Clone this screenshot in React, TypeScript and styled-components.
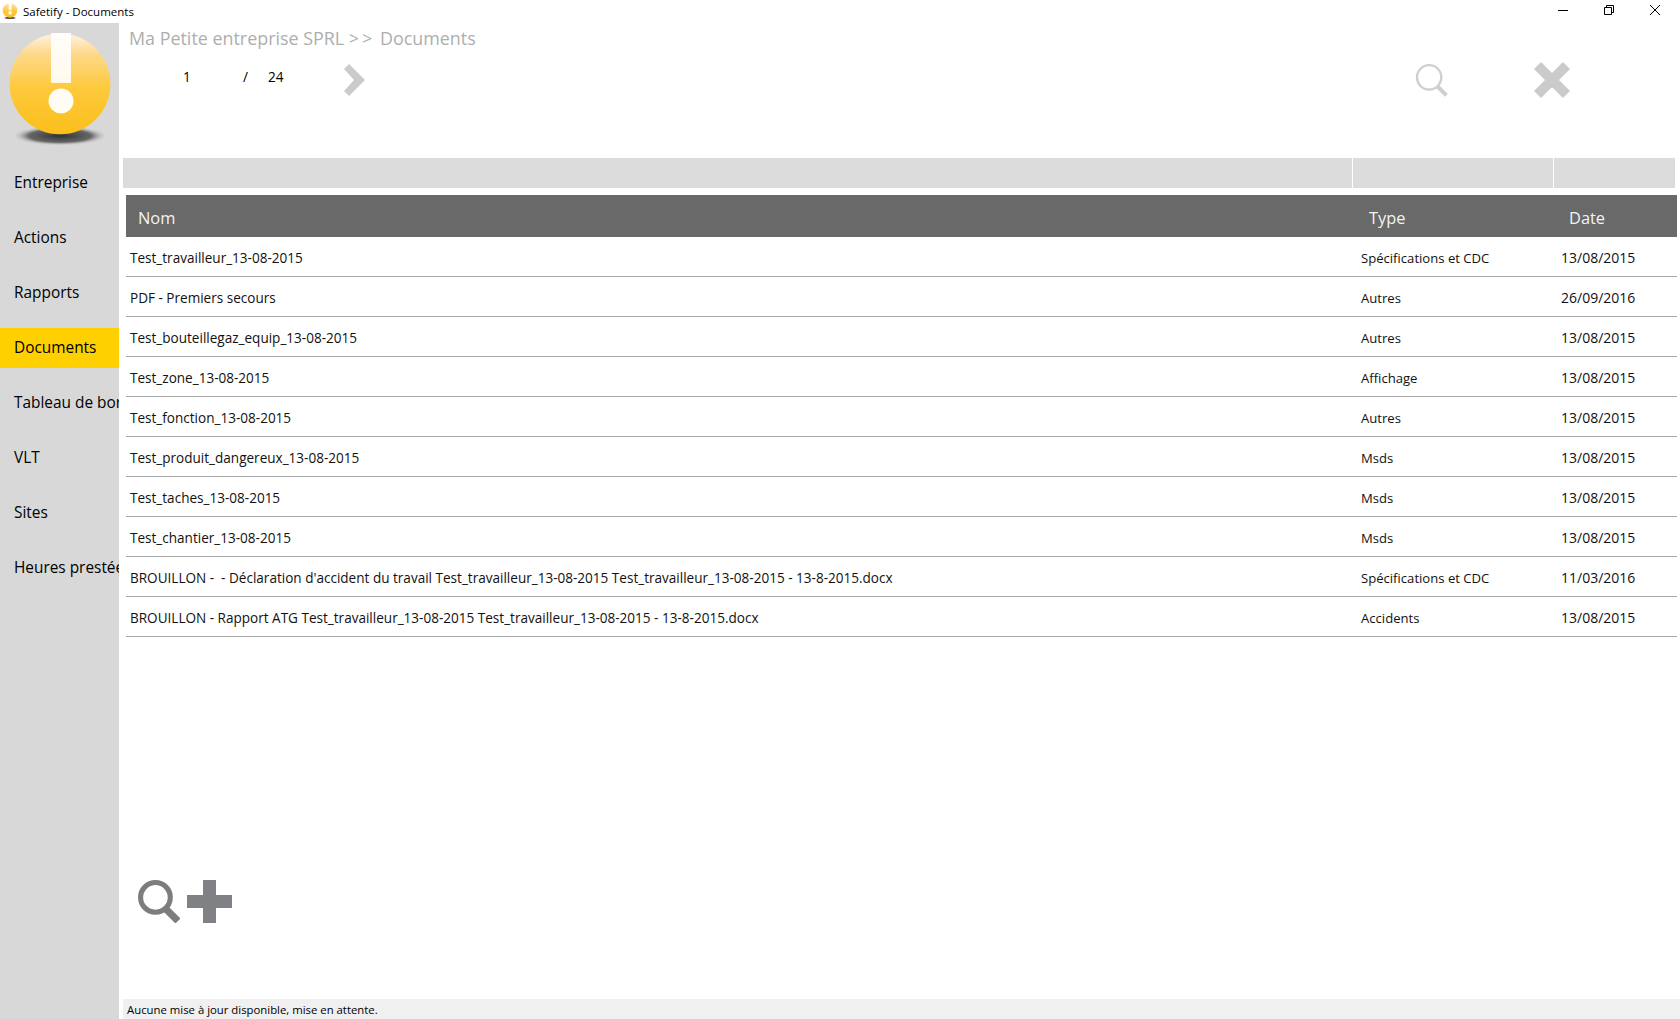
import { createGlobalStyle, styled } from "styled-components";

const font = `"Open Sans", "Noto Sans", sans-serif`;

const GlobalStyle = createGlobalStyle`
    html, body {
        margin: 0;
        padding: 0;
        height: 100%;
        background: #fff;
        overflow: hidden;
    }
    body {
        font-family: ${font};
        color: #000;
    }
`;

const menu = ["Entreprise", "Actions", "Rapports", "Documents", "Tableau de bord", "VLT", "Sites", "Heures prestées"];

const docs = [
    ["Test_travailleur_13-08-2015", "Spécifications et CDC", "13/08/2015"],
    ["PDF - Premiers secours", "Autres", "26/09/2016"],
    ["Test_bouteillegaz_equip_13-08-2015", "Autres", "13/08/2015"],
    ["Test_zone_13-08-2015", "Affichage", "13/08/2015"],
    ["Test_fonction_13-08-2015", "Autres", "13/08/2015"],
    ["Test_produit_dangereux_13-08-2015", "Msds", "13/08/2015"],
    ["Test_taches_13-08-2015", "Msds", "13/08/2015"],
    ["Test_chantier_13-08-2015", "Msds", "13/08/2015"],
    ["BROUILLON -  - Déclaration d'accident du travail Test_travailleur_13-08-2015 Test_travailleur_13-08-2015 - 13-8-2015.docx", "Spécifications et CDC", "11/03/2016"],
    ["BROUILLON - Rapport ATG Test_travailleur_13-08-2015 Test_travailleur_13-08-2015 - 13-8-2015.docx", "Accidents", "13/08/2015"],
];

const LogoMark = ({ size }: { size: number }) => (
    <svg width={size} height={size * 1.08} viewBox="0 0 110 119">
        <defs>
            <linearGradient id="ball" x1="0" y1="0" x2="0" y2="1">
                <stop offset="0" stopColor="#fff2e2" />
                <stop offset="0.2" stopColor="#fed98c" />
                <stop offset="0.55" stopColor="#fdc93a" />
                <stop offset="1" stopColor="#fbbf1c" />
            </linearGradient>
            <radialGradient id="shade" cx="0.5" cy="0.5" r="0.5">
                <stop offset="0" stopColor="#333" />
                <stop offset="0.65" stopColor="#666" />
                <stop offset="1" stopColor="#d8d8d8" stopOpacity="0" />
            </radialGradient>
        </defs>
        <ellipse cx="55" cy="103" rx="48" ry="10" fill="url(#shade)" />
        <circle cx="55" cy="51" r="50.5" fill="url(#ball)" />
        <rect x="46" y="0" width="20" height="50" fill="#fff" fillOpacity="0.9" />
        <circle cx="56" cy="68" r="12.5" fill="#fff" fillOpacity="0.95" />
    </svg>
);

const Lens = ({ size, color, stroke }: { size: number; color: string; stroke: number }) => (
    <svg width={size} height={size} viewBox="0 0 42 42">
        <circle cx="18" cy="17" r={17 - stroke / 2} fill="none" stroke={color} strokeWidth={stroke} />
        <path d="M28 28 L40 40" stroke={color} strokeWidth={stroke + 2} />
    </svg>
);

const App = () => (
    <Wrap>
        <GlobalStyle />
        <TitleBar>
            <TitleIcon><LogoMark size={16} /></TitleIcon>
            <TitleText>Safetify - Documents</TitleText>
            <WinButtons>
                <svg width="12" height="12" viewBox="0 0 12 12"><path d="M1 6.5H11" stroke="#000" /></svg>
                <svg width="12" height="12" viewBox="0 0 12 12"><path d="M1.5 3.5H8.5V10.5H1.5Z M3.5 3.5V1.5H10.5V8.5H8.5" stroke="#000" fill="none" /></svg>
                <svg width="12" height="12" viewBox="0 0 12 12"><path d="M1 1L11 11M11 1L1 11" stroke="#000" /></svg>
            </WinButtons>
        </TitleBar>
        <Body>
            <Sidebar>
                <LogoBox><LogoMark size={110} /></LogoBox>
                <Menu>
                    {menu.map((item) => (
                        <MenuItem key={item} $active={item === "Documents"}>{item}</MenuItem>
                    ))}
                </Menu>
            </Sidebar>
            <Main>
                <Crumb>Ma Petite entreprise SPRL <Arrows>&gt;&gt;</Arrows> Documents</Crumb>
                <Toolbar>
                    <PageCurrent>1</PageCurrent>
                    <PageSep>/</PageSep>
                    <PageTotal>24</PageTotal>
                    <svg width="22" height="32" viewBox="0 0 22 32">
                        <path d="M0 5 L5 0 L21 16 L5 32 L0 27 L10 16 Z" fill="#cbcbcb" />
                    </svg>
                    <ToolRight>
                        <Lens size={33} color="#cfcfcf" stroke={3} />
                        <svg width="36" height="36" viewBox="0 0 36 36">
                            <path d="M7 1 L18 12 L29 1 L35 7 L24 18 L35 29 L29 35 L18 24 L7 35 L1 29 L12 18 L1 7 Z" fill="#cbcbcb" stroke="#cbcbcb" strokeWidth="1.5" strokeLinejoin="round" />
                        </svg>
                    </ToolRight>
                </Toolbar>
                <FilterBar>
                    <FilterCell />
                    <FilterCell />
                    <FilterCell />
                </FilterBar>
                <Table>
                    <HeadRow>
                        <HeadCell $pad={12}>Nom</HeadCell>
                        <HeadCell $pad={13}>Type</HeadCell>
                        <HeadCell $pad={13}>Date</HeadCell>
                    </HeadRow>
                    {docs.map((doc, i) => (
                        <Row key={i}>
                            <Cell $size={13.55} $pad={4}>{doc[0]}</Cell>
                            <Cell $size={13.1} $pad={5}>{doc[1]}</Cell>
                            <Cell $size={14} $pad={5}>{doc[2]}</Cell>
                        </Row>
                    ))}
                </Table>
                <Actions>
                    <Lens size={43} color="#7d7d7d" stroke={5} />
                    <svg width="45" height="43" viewBox="0 0 45 43">
                        <path d="M16 0H29V15H45V28H29V43H16V28H0V15H16Z" fill="#808184" />
                    </svg>
                </Actions>
                <StatusBar>Aucune mise à jour disponible, mise en attente.</StatusBar>
            </Main>
        </Body>
    </Wrap>
);

export default App;

const Wrap = styled.div`
    width: 1680px;
    height: 1019px;
    display: flex;
    flex-direction: column;
    overflow: hidden;
`;

const TitleBar = styled.div`
    height: 23px;
    flex: none;
    display: flex;
    align-items: center;
    padding-left: 2px;
`;

const TitleIcon = styled.div`
    width: 16px;
    height: 18px;
    margin-right: 5px;
`;

const TitleText = styled.span`
    font-size: 11.5px;
`;

const WinButtons = styled.div`
    margin-left: auto;
    display: flex;
    align-items: center;
    gap: 34px;
    padding-right: 19px;
    margin-top: -4px;
`;

const Body = styled.div`
    flex: 1;
    display: flex;
    min-height: 0;
`;

const Sidebar = styled.nav`
    width: 119px;
    flex: none;
    background: #d8d8d8;
    overflow: hidden;
`;

const LogoBox = styled.div`
    height: 140px;
    padding: 10px 0 0 5px;
    box-sizing: border-box;
`;

const Menu = styled.div`
    display: flex;
    flex-direction: column;
    gap: 15px;
`;

const MenuItem = styled.div<{ $active?: boolean }>`
    height: 40px;
    line-height: 40px;
    padding-left: 14px;
    font-size: 15.4px;
    white-space: nowrap;
    background: ${(p) => (p.$active ? "#ffd000" : "transparent")};
`;

const Main = styled.main`
    flex: 1;
    display: flex;
    flex-direction: column;
    padding-left: 4px;
    min-width: 0;
`;

const Crumb = styled.div`
    height: 30px;
    line-height: 30px;
    padding-left: 6px;
    font-size: 17.9px;
    color: #aeaeae;
`;

const Arrows = styled.span`
    letter-spacing: 3px;
`;

const Toolbar = styled.div`
    height: 105px;
    display: flex;
    align-items: flex-start;
    padding-top: 11px;
    box-sizing: border-box;
    font-size: 13.6px;
`;

const PageCurrent = styled.span`
    width: 60px;
    margin-left: 60px;
    line-height: 26px;
`;

const PageSep = styled.span`
    width: 25px;
    line-height: 26px;
`;

const PageTotal = styled.span`
    width: 76px;
    line-height: 26px;
`;

const ToolRight = styled.div`
    display: flex;
    align-items: center;
    gap: 86px;
    margin: -2px 110px 0 auto;
`;

const FilterBar = styled.div`
    display: grid;
    grid-template-columns: 1229px 200px 121px;
    gap: 1px;
    height: 30px;
    width: 1551px;
`;

const FilterCell = styled.div`
    background: #dcdcdc;
`;

const Table = styled.div`
    margin: 7px 0 0 3px;
    width: 1551px;
`;

const Columns = styled.div`
    display: grid;
    grid-template-columns: 1230px 200px 121px;
`;

const HeadRow = styled(Columns)`
    height: 42px;
    background: #696969;
    color: #f2f2f2;
    font-size: 16.4px;
    align-items: center;
    padding-top: 2px;
    box-sizing: border-box;
`;

const HeadCell = styled.div<{ $pad: number }>`
    padding-left: ${(p) => p.$pad}px;
`;

const Row = styled(Columns)`
    height: 40px;
    box-sizing: border-box;
    border-bottom: 1px solid #a8a8a8;
    align-items: center;
    color: #111;
`;

const Cell = styled.div<{ $size: number; $pad: number }>`
    padding: 3px 0 0 ${(p) => p.$pad}px;
    font-size: ${(p) => p.$size}px;
    white-space: pre;
    line-height: 36px;
`;

const Actions = styled.div`
    margin: auto 0 76px 14px;
    display: flex;
    gap: 7px;
`;

const StatusBar = styled.div`
    height: 20px;
    line-height: 21px;
    background: #f0f0f0;
    padding-left: 4px;
    font-size: 11.35px;
`;
